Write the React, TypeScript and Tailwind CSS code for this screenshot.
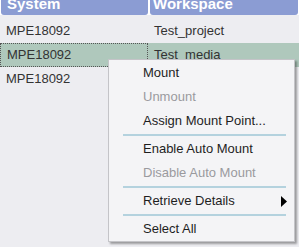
const rows = [
  { system: 'MPE18092', workspace: 'Test_project', selected: false },
  { system: 'MPE18092', workspace: 'Test_media', selected: true },
  { system: 'MPE18092', workspace: '', selected: false },
];

type MenuEntry =
  | { kind: 'item'; label: string; disabled?: boolean; submenu?: boolean }
  | { kind: 'sep' };

const menu: MenuEntry[] = [
  { kind: 'item', label: 'Mount' },
  { kind: 'item', label: 'Unmount', disabled: true },
  { kind: 'item', label: 'Assign Mount Point...' },
  { kind: 'sep' },
  { kind: 'item', label: 'Enable Auto Mount' },
  { kind: 'item', label: 'Disable Auto Mount', disabled: true },
  { kind: 'sep' },
  { kind: 'item', label: 'Retrieve Details', submenu: true },
  { kind: 'sep' },
  { kind: 'item', label: 'Select All' },
];

const ContextMenu = () => (
  <div className="absolute left-[108px] top-[59px] w-[187px] border border-[#c4c4c8] bg-[#f4f4f6] pt-[1px] shadow-[2px_2px_2px_rgba(0,0,0,0.35)]">
    {menu.map((entry, i) =>
      entry.kind === 'sep' ? (
        <div key={i} className="flex h-[4px] items-center pl-[14px] pr-[8px]">
          <div className="h-[2px] w-full bg-[#b4d2de]" />
        </div>
      ) : (
        <div
          key={i}
          className={`relative flex h-[24px] items-center pl-[34px] text-[13px] ${
            entry.disabled ? 'text-[#9a9a9e]' : 'text-[#1e1e1e]'
          }`}
        >
          {entry.label}
          {entry.submenu && (
            <svg className="absolute left-[172px] top-[7px]" width="6" height="11" viewBox="0 0 6 11">
              <path d="M0 0 L6 5.5 L0 11 Z" fill="#000" />
            </svg>
          )}
        </div>
      )
    )}
  </div>
);

export default function App() {
  return (
    <div
      className="relative h-[247px] w-[299px] overflow-hidden bg-[#ededf1]"
      style={{ fontFamily: '"Liberation Sans", Arial, sans-serif' }}
    >
      {/* column headers, scrolled slightly out of view */}
      <div className="flex h-[15px] gap-[2px] bg-white">
        <div className="h-full w-[147px] overflow-hidden rounded-b-[3px] bg-[#8b9cd3] pl-[6px] ml-[1px]">
          <div className="-mt-[4px] text-[15px] font-bold leading-[15px] text-white">System</div>
        </div>
        <div className="h-full flex-1 overflow-hidden rounded-b-[3px] bg-[#8b9cd3] pl-[3px] mr-[1px]">
          <div className="-mt-[4px] text-[15px] font-bold leading-[15px] text-white">Workspace</div>
        </div>
      </div>

      <div className="pt-[4px]">
        {rows.map((row, i) => (
          <div
            key={i}
            className={`flex h-[24px] items-center text-[13px] text-[#333] ${row.selected ? 'bg-[#afc8bc]' : ''}`}
          >
            <div
              className={`flex h-full w-[148px] items-center pl-[6px] ${
                row.selected ? 'border border-dotted border-[#555]' : ''
              }`}
            >
              {row.system}
            </div>
            <div className="pl-[6px]">{row.workspace}</div>
          </div>
        ))}
      </div>

      <ContextMenu />
    </div>
  );
}
